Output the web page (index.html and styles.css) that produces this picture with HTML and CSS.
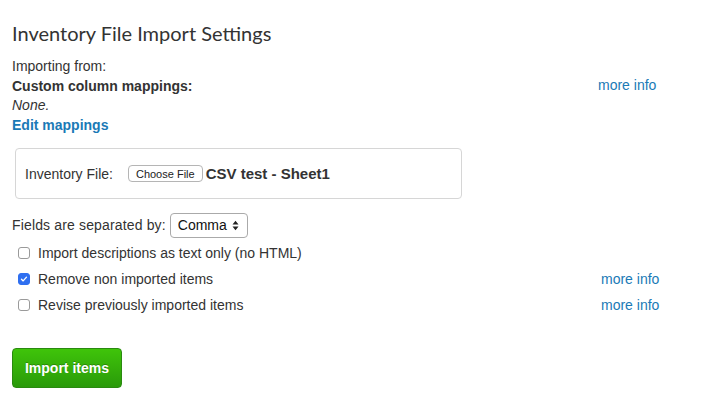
FILE: index.html
```html
<!DOCTYPE html>
<html>
<head>
<meta charset="utf-8">
<link rel="stylesheet" href="styles.css">
</head>
<body>
<div class="page">
  <h1 class="title">Inventory File Import Settings</h1>
  <div class="info">
    <div class="info-text">
      <div class="line">Importing from:</div>
      <div class="line bold">Custom column mappings:</div>
      <div class="line italic">None.</div>
      <div class="line"><a class="link bold" href="#">Edit mappings</a></div>
    </div>
    <a class="more more-top" href="#">more info</a>
  </div>
  <div class="filebox">
    <span class="file-label">Inventory File:</span>
    <span class="choose">Choose File</span>
    <span class="file-name">CSV test - Sheet1</span>
  </div>
  <div class="sep-row">
    <span class="sep-label">Fields are separated by:</span>
    <span class="select">Comma
      <svg class="arrows" width="7" height="11" viewBox="0 0 7 11"><path d="M0.5 4.5 L3.5 0.8 L6.5 4.5Z M0.5 6.5 L3.5 10.2 L6.5 6.5Z" fill="#222"/></svg>
    </span>
  </div>
  <div class="checks">
    <div class="check-row">
      <span class="box"></span>
      <span class="check-label">Import descriptions as text only (no HTML)</span>
    </div>
    <div class="check-row">
      <span class="box checked"><svg width="12" height="12" viewBox="0 0 12 12"><path d="M3 6.3 L5 8.3 L9 3.8" fill="none" stroke="#fff" stroke-width="1.6" stroke-linecap="round" stroke-linejoin="round"/></svg></span>
      <span class="check-label">Remove non imported items</span>
      <a class="more" href="#">more info</a>
    </div>
    <div class="check-row">
      <span class="box"></span>
      <span class="check-label">Revise previously imported items</span>
      <a class="more" href="#">more info</a>
    </div>
  </div>
  <div class="actions">
    <span class="import-btn">Import items</span>
  </div>
</div>
</body>
</html>
```
FILE: styles.css
```css
html, body {
  margin: 0;
  padding: 0;
  background: #fff;
}
body {
  font-family: "Liberation Sans", Arial, sans-serif;
  font-size: 14px;
  color: #333;
}
.page {
  padding: 20px 12px 0 12px;
  width: 660px;
}
.title {
  font-family: Lato, "Liberation Sans", sans-serif;
  font-weight: 400;
  font-size: 20px;
  line-height: 26px;
  color: #333;
  margin: 0 0 11px 0;
}
.info {
  display: grid;
  grid-template-columns: 586px 1fr;
}
.line {
  line-height: 19.5px;
}
.bold { font-weight: 700; }
.italic { font-style: italic; }
a { text-decoration: none; }
.link { color: #1a7ab6; }
.more {
  color: #1a7ab6;
  font-size: 14px;
}
.more-top {
  padding-top: 19px;
  line-height: 19.5px;
}
.filebox {
  margin: 13px 0 0 3px;
  border: 1px solid #d6d6d6;
  border-radius: 4px;
  display: flex;
  align-items: center;
  padding-left: 9px;
  box-sizing: border-box;
  width: 447px;
  height: 51px;
}
.file-label {
  margin-right: 15px;
}
.choose {
  font-size: 11px;
  border: 1px solid #b5b5b5;
  border-radius: 4px;
  padding: 1px 7px;
  height: 17px;
  box-sizing: border-box;
  line-height: 14px;
  color: #222;
  margin-right: 3px;
  background: #fff;
}
.file-name {
  font-weight: 700;
  font-size: 15px;
  color: #333;
}
.sep-row {
  display: flex;
  align-items: center;
  margin-top: 13px;
  height: 26px;
}
.sep-label {
  letter-spacing: 0.15px;
}
.select {
  margin-left: 4px;
  display: inline-flex;
  align-items: center;
  font-size: 14px;
  color: #111;
  border: 1px solid #aaa;
  border-radius: 4px;
  height: 25px;
  box-sizing: border-box;
  padding: 0 8px 0 7px;
  width: 78px;
  justify-content: space-between;
}
.checks {
  margin-top: 2px;
}
.check-row {
  display: flex;
  align-items: center;
  height: 26px;
}
.box {
  width: 12px;
  height: 12px;
  box-sizing: border-box;
  border: 1px solid #9a9a9a;
  border-radius: 3px;
  margin: 0 8px 0 6px;
  display: inline-flex;
  align-items: center;
  justify-content: center;
}
.box.checked {
  background: #2f6ff0;
  border-color: #2f6ff0;
}
.check-label {
  width: 563px;
}
.actions {
  margin-top: 30px;
}
.import-btn {
  display: inline-flex;
  align-items: center;
  justify-content: center;
  width: 110px;
  height: 40px;
  box-sizing: border-box;
  border-radius: 4px;
  background: linear-gradient(#3fc40a, #2a9a0a);
  border: 1px solid #2a8a10;
  color: #fff;
  font-weight: 700;
  font-size: 14px;
  text-shadow: 0 -1px 0 rgba(0,0,0,0.25);
}
```
